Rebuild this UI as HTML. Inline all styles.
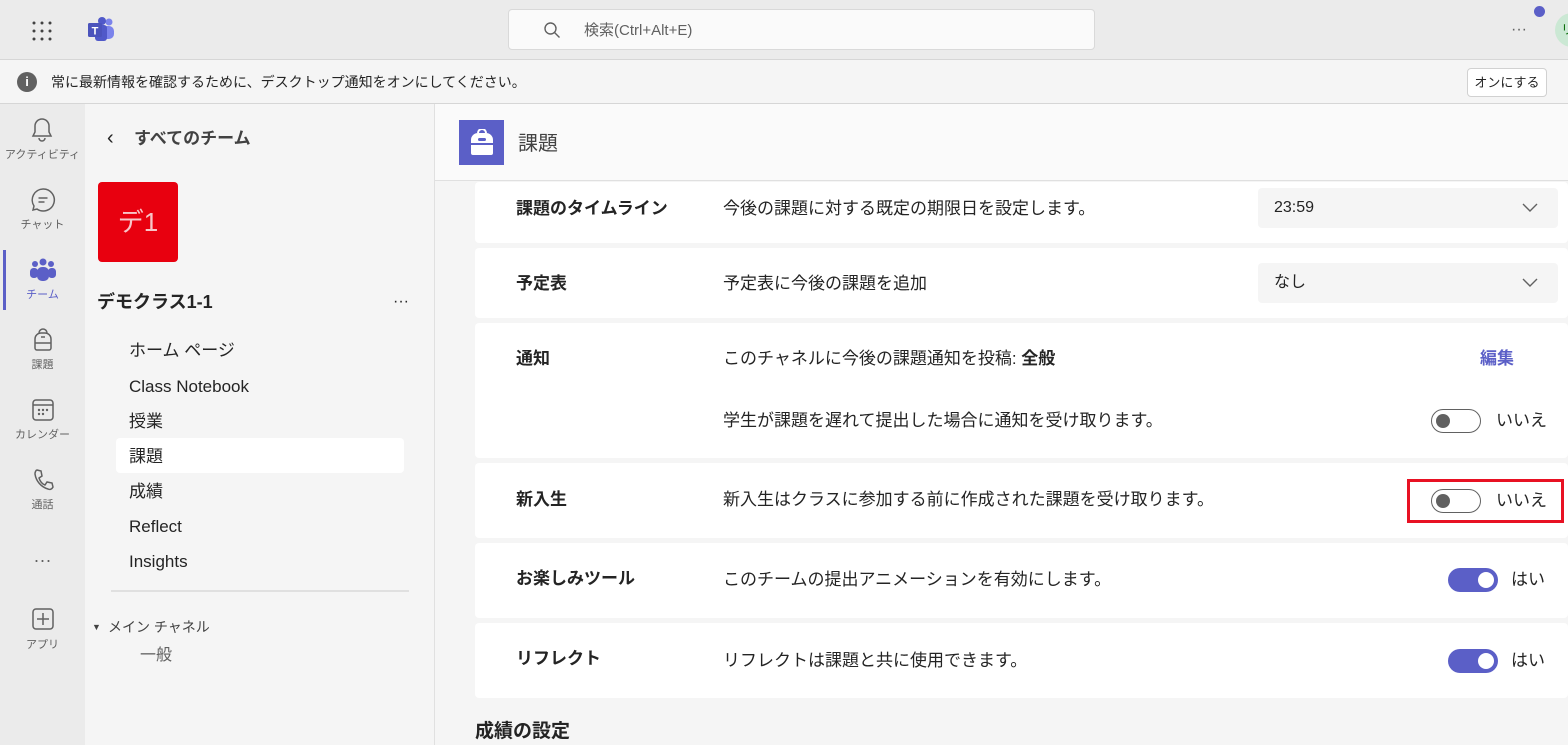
<!DOCTYPE html>
<html><head><meta charset="utf-8"><style>
*{box-sizing:border-box;margin:0;padding:0}
body{width:1568px;height:745px;overflow:hidden;font-family:"Liberation Sans","Noto Sans CJK JP",sans-serif;color:#242424;background:#f5f5f5;position:relative;line-height:1}
.abs{position:absolute}
.top{left:0;top:0;width:1568px;height:60px;background:#ebebeb;border-bottom:1px solid #d6d6d6}
.search{left:508px;top:9px;width:587px;height:41px;background:#fafafa;border:1px solid #d9d9d9;border-radius:4px}
.notif{left:0;top:60px;width:1568px;height:44px;background:#f5f5f5;border-bottom:1px solid #d6d6d6;font-size:14px}
.rail{left:0;top:104px;width:85px;height:641px;background:#ebebeb}
.ri{position:absolute;left:0;width:85px;text-align:center;font-size:11px;color:#616161}
.side{left:85px;top:104px;width:350px;height:641px;background:#f5f5f5;border-right:1px solid #e0e0e0}
.nav{position:absolute;left:129px;font-size:17px;color:#242424}
.main{left:435px;top:104px;width:1133px;height:641px;background:#f5f5f5}
.hdr{left:435px;top:104px;width:1133px;height:77px;background:#fafafa;border-bottom:1px solid #e0e0e0}
.card{position:absolute;left:475px;width:1093px;background:#fff;border-radius:4px}
.lbl{position:absolute;left:41px;font-size:17px;font-weight:bold}
.desc{position:absolute;left:248px;font-size:17px}
.dd{position:absolute;left:783px;width:300px;height:40px;background:#f5f5f5;border-radius:4px;font-size:16px;padding:12px 16px}
.tg{position:absolute;width:50px;height:24px;border-radius:12px}
.off{border:1px solid #616161;background:#fff}
.off::after{content:"";position:absolute;left:4px;top:4px;width:14px;height:14px;border-radius:50%;background:#616161}
.on{background:#5b5fc7}
.on::after{content:"";position:absolute;right:4px;top:4px;width:16px;height:16px;border-radius:50%;background:#fff}
.tt{position:absolute;font-size:17px}
</style></head><body>
<div class="abs top"></div>
<svg class="abs" style="left:32px;top:21px" width="20" height="20"><g fill="#424242"><circle cx="2" cy="2" r="1.5"/><circle cx="10" cy="2" r="1.5"/><circle cx="18" cy="2" r="1.5"/><circle cx="2" cy="10" r="1.5"/><circle cx="10" cy="10" r="1.5"/><circle cx="18" cy="10" r="1.5"/><circle cx="2" cy="18" r="1.5"/><circle cx="10" cy="18" r="1.5"/><circle cx="18" cy="18" r="1.5"/></g></svg>
<svg class="abs" style="left:87px;top:17px" width="28" height="25"><circle cx="22" cy="5" r="3.5" fill="#7b83eb"/><circle cx="15" cy="4" r="4" fill="#5059c9"/><rect x="12" y="9" width="15" height="13" rx="5" fill="#7b83eb"/><rect x="8" y="8" width="12" height="16" rx="3" fill="#5059c9"/><rect x="1" y="6" width="14" height="14" rx="1.5" fill="#4b53bc"/><text x="8" y="17.5" font-size="11" font-weight="bold" fill="#fff" text-anchor="middle" font-family="Liberation Sans">T</text></svg>
<div class="abs search"><svg class="abs" style="left:34px;top:11px" width="18" height="18"><circle cx="7.5" cy="7.5" r="5.5" fill="none" stroke="#616161" stroke-width="1.4"/><path d="M11.5 11.5l5 5" stroke="#616161" stroke-width="1.4"/></svg><span class="abs" style="left:75px;top:13px;font-size:15px;color:#616161">検索(Ctrl+Alt+E)</span></div>
<span class="abs" style="left:1511px;top:22px;font-size:16px;color:#616161">···</span>
<div class="abs" style="left:1534px;top:6px;width:11px;height:11px;border-radius:50%;background:#5b5fc7"></div>
<div class="abs" style="left:1555px;top:13px;width:34px;height:34px;border-radius:50%;background:#cbe8d4;font-size:13px;color:#0e700e;padding:10px 0 0 6px">リ</div>
<div class="abs notif"><div class="abs" style="left:17px;top:12px;width:20px;height:20px;border-radius:50%;background:#616161;color:#fff;font-size:13px;font-weight:bold;text-align:center;line-height:20px">i</div><span class="abs" style="left:51px;top:15px">常に最新情報を確認するために、デスクトップ通知をオンにしてください。</span>
<div class="abs" style="left:1467px;top:8px;width:80px;height:29px;background:#fff;border:1px solid #d1d1d1;border-radius:4px;font-size:13px;text-align:center;line-height:27px">オンにする</div></div>
<div class="abs rail">
<svg class="abs" style="left:30px;top:13px" width="24" height="26"><path d="M12 2a7 7 0 0 0-7 7v6l-2 4h18l-2-4V9a7 7 0 0 0-7-7zM9 21a3 3 0 0 0 6 0" fill="none" stroke="#616161" stroke-width="1.5"/></svg><div class="ri" style="top:46px">アクティビティ</div>
<svg class="abs" style="left:30px;top:83px" width="26" height="26"><path d="M13 2a11 11 0 1 1-6 20l-4 1 1-4A11 11 0 0 1 13 2z" fill="none" stroke="#616161" stroke-width="1.5"/><path d="M8.5 11h9M8.5 15h6" stroke="#616161" stroke-width="1.5"/></svg><div class="ri" style="top:116px">チャット</div>
<div class="abs" style="left:3px;top:146px;width:3px;height:60px;background:#5b5fc7"></div>
<svg class="abs" style="left:30px;top:154px" width="26" height="24" fill="#5b5fc7"><circle cx="13" cy="4" r="3.5"/><circle cx="5" cy="6" r="3"/><circle cx="21" cy="6" r="3"/><rect x="7" y="9" width="12" height="14" rx="5"/><rect x="0" y="10" width="8" height="10" rx="3.5"/><rect x="18" y="10" width="8" height="10" rx="3.5"/></svg><div class="ri" style="top:186px;color:#5b5fc7">チーム</div>
<svg class="abs" style="left:32px;top:224px" width="22" height="24"><path d="M7 5a4 4 0 0 1 8 0M3 11a6 6 0 0 1 6-6h4a6 6 0 0 1 6 6v9a2 2 0 0 1-2 2H5a2 2 0 0 1-2-2z M3 15h16M9 9h4" fill="none" stroke="#616161" stroke-width="1.5"/></svg><div class="ri" style="top:256px">課題</div>
<svg class="abs" style="left:31px;top:294px" width="24" height="24"><rect x="2" y="2" width="20" height="20" rx="3" fill="none" stroke="#616161" stroke-width="1.5"/><path d="M2 7h20" stroke="#616161" stroke-width="1.5"/><g fill="#616161"><circle cx="8" cy="12" r="1.2"/><circle cx="12" cy="12" r="1.2"/><circle cx="16" cy="12" r="1.2"/><circle cx="8" cy="16" r="1.2"/><circle cx="12" cy="16" r="1.2"/></g></svg><div class="ri" style="top:326px">カレンダー</div>
<svg class="abs" style="left:32px;top:364px" width="22" height="24"><path d="M5 2l4 1 1 5-3 2c1 3 3 6 6 7l2-3 5 1 1 4c-1 2-3 3-5 2C9 19 4 13 3 6c0-2 1-4 2-4z" fill="none" stroke="#616161" stroke-width="1.5"/></svg><div class="ri" style="top:396px">通話</div>
<div class="ri" style="top:447px;font-size:18px">···</div>
<svg class="abs" style="left:32px;top:504px" width="22" height="22"><rect x="1" y="1" width="20" height="20" rx="3" fill="none" stroke="#616161" stroke-width="1.5"/><path d="M11 5v12M5 11h12" stroke="#616161" stroke-width="1.5"/></svg><div class="ri" style="top:536px">アプリ</div>
</div>
<div class="abs side">
<span class="abs" style="left:22px;top:24px;font-size:20px">‹</span><span class="abs" style="left:49px;top:26px;font-size:17px;font-weight:bold;color:#424242">すべてのチーム</span>
<div class="abs" style="left:13px;top:78px;width:80px;height:80px;background:#e8000f;border-radius:4px;color:#f7c5c8;font-size:26px;text-align:center;line-height:80px">デ1</div>
<span class="abs" style="left:12px;top:189px;font-size:18px;font-weight:bold">デモクラス1-1</span>
<span class="abs" style="left:308px;top:190px;font-size:16px">···</span>
<div class="abs" style="left:31px;top:334px;width:288px;height:35px;background:#fff;border-radius:4px"></div>
<div class="abs" style="left:26px;top:486px;width:298px;height:2px;background:#e0e0e0"></div>
<span class="abs" style="left:7px;top:519px;font-size:9px;color:#424242">▼</span><span class="abs" style="left:23px;top:516px;font-size:14px;color:#424242">メイン チャネル</span>
<span class="abs" style="left:55px;top:544px;font-size:16px;color:#616161">一般</span>
</div>
<div class="nav" style="top:342px">ホーム ページ</div><div class="nav" style="top:378px">Class Notebook</div><div class="nav" style="top:413px">授業</div><div class="nav" style="top:448px">課題</div><div class="nav" style="top:483px">成績</div><div class="nav" style="top:518px">Reflect</div><div class="nav" style="top:553px">Insights</div>
<div class="abs main"></div>
<div class="abs hdr"><div class="abs" style="left:24px;top:16px;width:45px;height:45px;background:#5b5fc7"><svg class="abs" style="left:11px;top:9px" width="24" height="28"><path d="M8 4a4 4 0 0 1 8 0" fill="none" stroke="#fff" stroke-width="2"/><path d="M1 11a7 7 0 0 1 7-7h8a7 7 0 0 1 7 7v3H1zM1 16h22v8a2 2 0 0 1-2 2H3a2 2 0 0 1-2-2z" fill="#fff"/><rect x="8" y="9" width="8" height="3" rx="1.5" fill="#5b5fc7"/></svg></div><span class="abs" style="left:83px;top:30px;font-size:20px;color:#424242">課題</span></div>
<div class="card" style="top:182px;height:61px"><span class="lbl" style="top:18px">課題のタイムライン</span><span class="desc" style="top:18px">今後の課題に対する既定の期限日を設定します。</span><div class="dd" style="top:6px">23:59<svg class="abs" style="right:20px;top:15px" width="16" height="10"><path d="M1 1l7 7 7-7" fill="none" stroke="#616161" stroke-width="1.4"/></svg></div></div>
<div class="card" style="top:248px;height:70px"><span class="lbl" style="top:27px">予定表</span><span class="desc" style="top:27px">予定表に今後の課題を追加</span><div class="dd" style="top:15px">なし<svg class="abs" style="right:20px;top:15px" width="16" height="10"><path d="M1 1l7 7 7-7" fill="none" stroke="#616161" stroke-width="1.4"/></svg></div></div>
<div class="card" style="top:323px;height:135px"><span class="lbl" style="top:27px">通知</span><span class="desc" style="top:27px">このチャネルに今後の課題通知を投稿: <b>全般</b></span><span class="abs" style="left:1005px;top:27px;font-size:17px;font-weight:bold;color:#5b5fc7">編集</span><span class="desc" style="top:89px">学生が課題を遅れて提出した場合に通知を受け取ります。</span><div class="tg off" style="left:956px;top:86px"></div><span class="tt" style="left:1021px;top:89px">いいえ</span></div>
<div class="card" style="top:463px;height:75px"><span class="lbl" style="top:28px">新入生</span><span class="desc" style="top:28px">新入生はクラスに参加する前に作成された課題を受け取ります。</span><div class="tg off" style="left:956px;top:26px"></div><span class="tt" style="left:1021px;top:29px">いいえ</span><div class="abs" style="left:932px;top:16px;width:157px;height:44px;border:3px solid #e81123"></div></div>
<div class="card" style="top:543px;height:75px"><span class="lbl" style="top:27px">お楽しみツール</span><span class="desc" style="top:28px">このチームの提出アニメーションを有効にします。</span><div class="tg on" style="left:973px;top:25px"></div><span class="tt" style="left:1036px;top:28px">はい</span></div>
<div class="card" style="top:623px;height:75px"><span class="lbl" style="top:27px">リフレクト</span><span class="desc" style="top:29px">リフレクトは課題と共に使用できます。</span><div class="tg on" style="left:973px;top:26px"></div><span class="tt" style="left:1036px;top:29px">はい</span></div>
<span class="abs" style="left:475px;top:722px;font-size:19px;font-weight:bold">成績の設定</span>
</body></html>
